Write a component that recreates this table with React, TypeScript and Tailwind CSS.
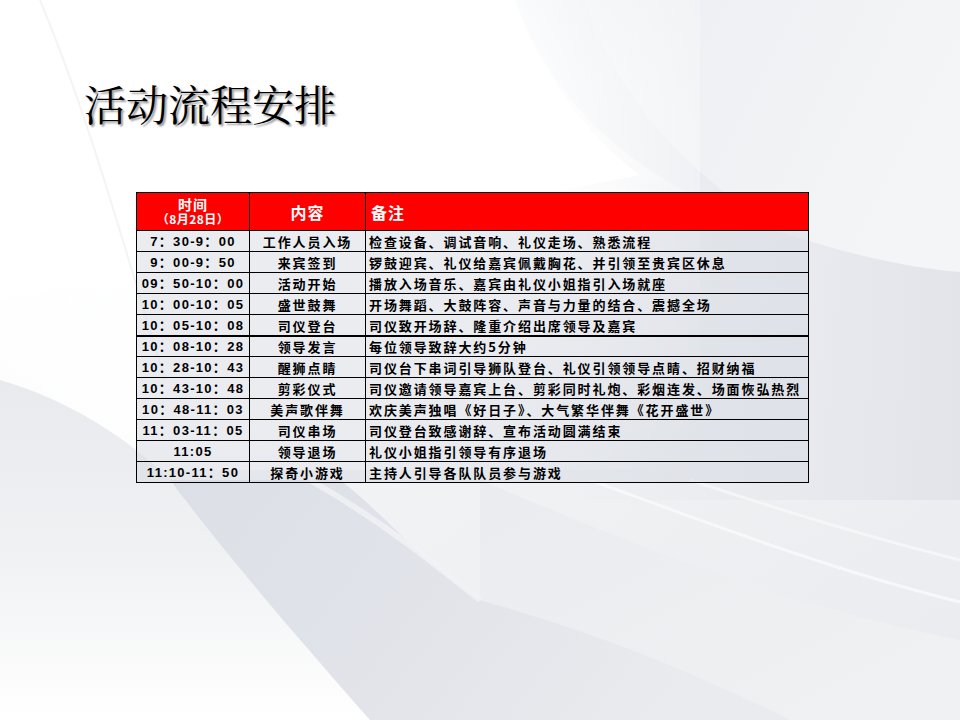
import React from "react";

const rows: { t: string; c: string; r: string }[] = [
  { t: "7：30-9：00", c: "工作人员入场", r: "检查设备、调试音响、礼仪走场、熟悉流程" },
  { t: "9：00-9：50", c: "来宾签到", r: "锣鼓迎宾、礼仪给嘉宾佩戴胸花、并引领至贵宾区休息" },
  { t: "09：50-10：00", c: "活动开始", r: "播放入场音乐、嘉宾由礼仪小姐指引入场就座" },
  { t: "10：00-10：05", c: "盛世鼓舞", r: "开场舞蹈、大鼓阵容、声音与力量的结合、震撼全场" },
  { t: "10：05-10：08", c: "司仪登台", r: "司仪致开场辞、隆重介绍出席领导及嘉宾" },
  { t: "10：08-10：28", c: "领导发言", r: "每位领导致辞大约5分钟" },
  { t: "10：28-10：43", c: "醒狮点睛", r: "司仪台下串词引导狮队登台、礼仪引领领导点睛、招财纳福" },
  { t: "10：43-10：48", c: "剪彩仪式", r: "司仪邀请领导嘉宾上台、剪彩同时礼炮、彩烟连发、场面恢弘热烈" },
  { t: "10：48-11：03", c: "美声歌伴舞", r: "欢庆美声独唱《好日子》、大气繁华伴舞《花开盛世》" },
  { t: "11：03-11：05", c: "司仪串场", r: "司仪登台致感谢辞、宣布活动圆满结束" },
  { t: "11:05", c: "领导退场", r: "礼仪小姐指引领导有序退场" },
  { t: "11:10-11：50", c: "探奇小游戏", r: "主持人引导各队队员参与游戏" },
];

function Background() {
  return (
    <svg
      className="absolute inset-0 h-full w-full"
      viewBox="0 0 960 720"
      preserveAspectRatio="none"
    >
      <defs>
        <linearGradient id="base" x1="0" y1="0" x2="1" y2="1">
          <stop offset="0" stopColor="#ffffff" />
          <stop offset="0.45" stopColor="#f3f4f6" />
          <stop offset="1" stopColor="#e9ebee" />
        </linearGradient>
        <radialGradient id="glow" cx="260" cy="160" r="520" gradientUnits="userSpaceOnUse">
          <stop offset="0" stopColor="#ffffff" stopOpacity="1" />
          <stop offset="0.55" stopColor="#ffffff" stopOpacity="0.9" />
          <stop offset="1" stopColor="#ffffff" stopOpacity="0" />
        </radialGradient>
        <linearGradient id="tr" x1="0" y1="0" x2="1" y2="0.3">
          <stop offset="0" stopColor="#e4e7ec" />
          <stop offset="0.3" stopColor="#edeff2" />
          <stop offset="1" stopColor="#f4f5f7" />
        </linearGradient>
        <linearGradient id="right" x1="0" y1="0" x2="1" y2="0">
          <stop offset="0" stopColor="#e6e8ed" stopOpacity="0" />
          <stop offset="1" stopColor="#e2e4ea" stopOpacity="1" />
        </linearGradient>
        <linearGradient id="left" x1="0" y1="0" x2="0" y2="1">
          <stop offset="0" stopColor="#e9eaee" />
          <stop offset="0.5" stopColor="#f0f1f3" />
          <stop offset="1" stopColor="#ffffff" />
        </linearGradient>
        <linearGradient id="band" x1="0" y1="0" x2="1" y2="0.3">
          <stop offset="0" stopColor="#dcdfe7" />
          <stop offset="0.55" stopColor="#e2e4ea" />
          <stop offset="1" stopColor="#e9ebee" />
        </linearGradient>
        <linearGradient id="br" x1="0" y1="0" x2="1" y2="1">
          <stop offset="0" stopColor="#e9ebee" />
          <stop offset="1" stopColor="#f1f2f4" />
        </linearGradient>
      </defs>
      <rect x="0" y="0" width="960" height="720" fill="url(#base)" />
      <rect x="560" y="180" width="400" height="320" fill="url(#right)" />
      <path
        d="M515,0 C555,110 640,185 780,232 C850,255 910,268 960,272 L960,0 Z"
        fill="url(#tr)"
      />
      <path
        d="M515,0 C555,110 640,185 780,232 C700,180 620,110 585,0 Z"
        fill="#e1e4ea"
        opacity="0.45"
      />
      <rect x="0" y="0" width="700" height="470" fill="url(#glow)" />
      <path d="M0,0 L515,0 C540,70 580,130 640,175 L0,300 Z" fill="#ffffff" />
      <path
        d="M0,380 C70,400 130,440 170,480 C230,560 300,640 370,720 L0,720 Z"
        fill="url(#left)"
      />
      <path
        d="M170,480 C230,560 300,640 370,720 L790,720 C690,670 590,630 480,600 C420,560 380,510 340,480 Z"
        fill="url(#band)"
      />
      <path
        d="M480,480 C600,530 760,600 960,640 L960,720 L790,720 C690,670 590,630 480,600 Z"
        fill="url(#br)"
        opacity="0.9"
      />
      <path
        d="M590,480 C700,520 830,570 960,602"
        stroke="#f7f8f9"
        strokeWidth="3"
        fill="none"
        opacity="0.9"
      />
      <path
        d="M690,480 C780,510 880,540 960,560"
        stroke="#f7f8f9"
        strokeWidth="3"
        fill="none"
        opacity="0.8"
      />
      <path
        d="M310,480 C380,520 430,560 480,600"
        stroke="#f1f2f5"
        strokeWidth="6"
        fill="none"
        opacity="0.8"
      />
      <path
        d="M40,0 C90,120 125,250 165,380"
        stroke="#eef0f3"
        strokeWidth="2"
        fill="none"
        opacity="0.7"
      />
    </svg>
  );
}

export default function App() {
  const cjk = '"Noto Sans CJK SC", "Noto Sans", sans-serif';
  return (
    <div className="relative h-[720px] w-[960px] overflow-hidden bg-white">
      <Background />
      <div className="relative flex flex-col">
        <h1
          className="ml-[84px] mt-[82px] text-[42px] leading-none font-normal text-black [text-shadow:2px_2px_2px_rgba(0,0,0,0.4)]"
          style={{ fontFamily: '"Noto Serif CJK SC", "Noto Sans CJK SC", serif' }}
        >
          活动流程安排
        </h1>
        <div
          className="ml-[136px] mt-[68px] flex w-[673px] flex-col border border-black font-bold"
          style={{ fontFamily: cjk }}
        >
          <div className="grid h-[37px] grid-cols-[112px_116px_1fr] bg-[#ff0000] text-white">
            <div className="flex flex-col items-center justify-center">
              <span className="block text-[14px] leading-[15px] tracking-[1px]">时间</span>
              <span className="block text-[12px] leading-[14px] tracking-[0.5px]">（8月28日）</span>
            </div>
            <div className="flex items-center justify-center border-l border-black text-[16px] tracking-[1px]">
              内容
            </div>
            <div className="flex items-center border-l border-black pl-[5px] text-[16px] tracking-[1px]">
              备注
            </div>
          </div>
          {rows.map((row, i) => (
            <div
              key={i}
              className={
                i === 5
                  ? "grid h-[21px] grid-cols-[112px_116px_1fr] border-t-2 border-black bg-[#d6d9e2]/50 text-[13px] leading-none text-black"
                  : "grid h-[21px] grid-cols-[112px_116px_1fr] border-t border-black bg-[#d6d9e2]/50 text-[13px] leading-none text-black"
              }
            >
              <div
                className="flex items-center justify-center tracking-[1.3px]"
                style={{ fontFamily: '"Liberation Sans", "Noto Sans CJK SC", sans-serif' }}
              >
                {row.t}
              </div>
              <div className="flex items-center justify-center border-l border-black tracking-[1.9px]">
                {row.c}
              </div>
              <div className="flex items-center border-l border-black pl-[3px] tracking-[1.9px] whitespace-nowrap">
                {row.r}
              </div>
            </div>
          ))}
        </div>
      </div>
    </div>
  );
}
